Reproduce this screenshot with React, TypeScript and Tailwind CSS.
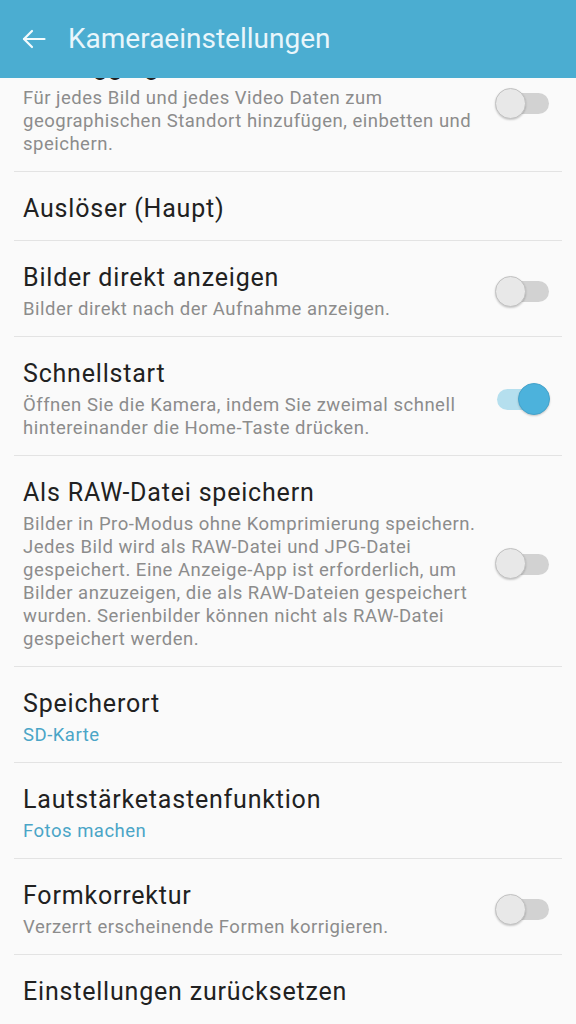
type Item = {
  title: string
  desc?: string
  value?: string
  toggle?: boolean
  on?: boolean
}

const items: Item[] = [
  {
    title: 'Geotagging',
    desc: 'Für jedes Bild und jedes Video Daten zum geographischen Standort hinzufügen, einbetten und speichern.',
    toggle: true,
  },
  { title: 'Auslöser (Haupt)' },
  { title: 'Bilder direkt anzeigen', desc: 'Bilder direkt nach der Aufnahme anzeigen.', toggle: true },
  {
    title: 'Schnellstart',
    desc: 'Öffnen Sie die Kamera, indem Sie zweimal schnell hintereinander die Home-Taste drücken.',
    toggle: true,
    on: true,
  },
  {
    title: 'Als RAW-Datei speichern',
    desc: 'Bilder in Pro-Modus ohne Komprimierung speichern. Jedes Bild wird als RAW-Datei und JPG-Datei gespeichert. Eine Anzeige-App ist erforderlich, um Bilder anzuzeigen, die als RAW-Dateien gespeichert wurden. Serienbilder können nicht als RAW-Datei gespeichert werden.',
    toggle: true,
  },
  { title: 'Speicherort', value: 'SD-Karte' },
  { title: 'Lautstärketastenfunktion', value: 'Fotos machen' },
  { title: 'Formkorrektur', desc: 'Verzerrt erscheinende Formen korrigieren.', toggle: true },
  { title: 'Einstellungen zurücksetzen' },
]

function Toggle({ on }: { on?: boolean }) {
  return (
    <div className="relative w-[55px] h-[32px] shrink-0 flex items-center">
      <div className={`ml-[2px] w-[52px] h-[21px] rounded-full ${on ? 'bg-[#b5dfee]' : 'bg-[#d2d2d2]'}`} />
      {on ? (
        <div className="absolute right-0 top-0 w-[32px] h-[32px] rounded-full bg-[#4cb2dc] border border-[#45a3cb] shadow-[0_1px_2px_rgba(0,0,0,0.2)]" />
      ) : (
        <div className="absolute left-0 top-0 w-[31px] h-[31px] rounded-full bg-[#e8e8e8] border border-[#c2c2c2] shadow-[0_1px_2px_rgba(0,0,0,0.2)]" />
      )}
    </div>
  )
}

export default function App() {
  return (
    <div
      className="relative w-[576px] h-[1024px] overflow-hidden bg-[#fafafa]"
      style={{ fontFamily: 'Roboto, "Noto Sans", sans-serif' }}
    >
      <header className="absolute top-0 left-0 right-0 z-10 h-[78px] bg-[#4badd1] flex items-center pl-[22px] gap-[22px]">
        <svg width="24" height="20" viewBox="0 0 24 20" fill="none" stroke="#f4fbfd" strokeWidth="2.2" strokeLinecap="round" strokeLinejoin="round">
          <path d="M22.5 10H2" />
          <path d="M10 2L2 10L10 18" />
        </svg>
        <h1 className="text-[28px] leading-none text-[#e9f6fb] font-normal">Kameraeinstellungen</h1>
      </header>

      <div className="pt-[30px] px-[14px]">
        {items.map((item, i) => (
          <div
            key={item.title}
            className={`flex items-center gap-4 pl-[9px] pr-[12px] pt-[21px] pb-[15px] ${i < items.length - 1 ? 'border-b border-[#e3e3e3]' : ''}`}
          >
            <div className="flex-1 min-w-0">
              <div className="text-[25px] leading-[32px] tracking-[0.8px] text-[#212121]">{item.title}</div>
              {item.desc && (
                <div className="mt-[4px] text-[18.5px] leading-[23px] tracking-[0.5px] text-[#8c8c8c]">{item.desc}</div>
              )}
              {item.value && (
                <div className="mt-[4px] text-[18.5px] leading-[23px] tracking-[0.5px] text-[#4aa5c7]">{item.value}</div>
              )}
            </div>
            {item.toggle && <Toggle on={item.on} />}
          </div>
        ))}
      </div>
    </div>
  )
}
